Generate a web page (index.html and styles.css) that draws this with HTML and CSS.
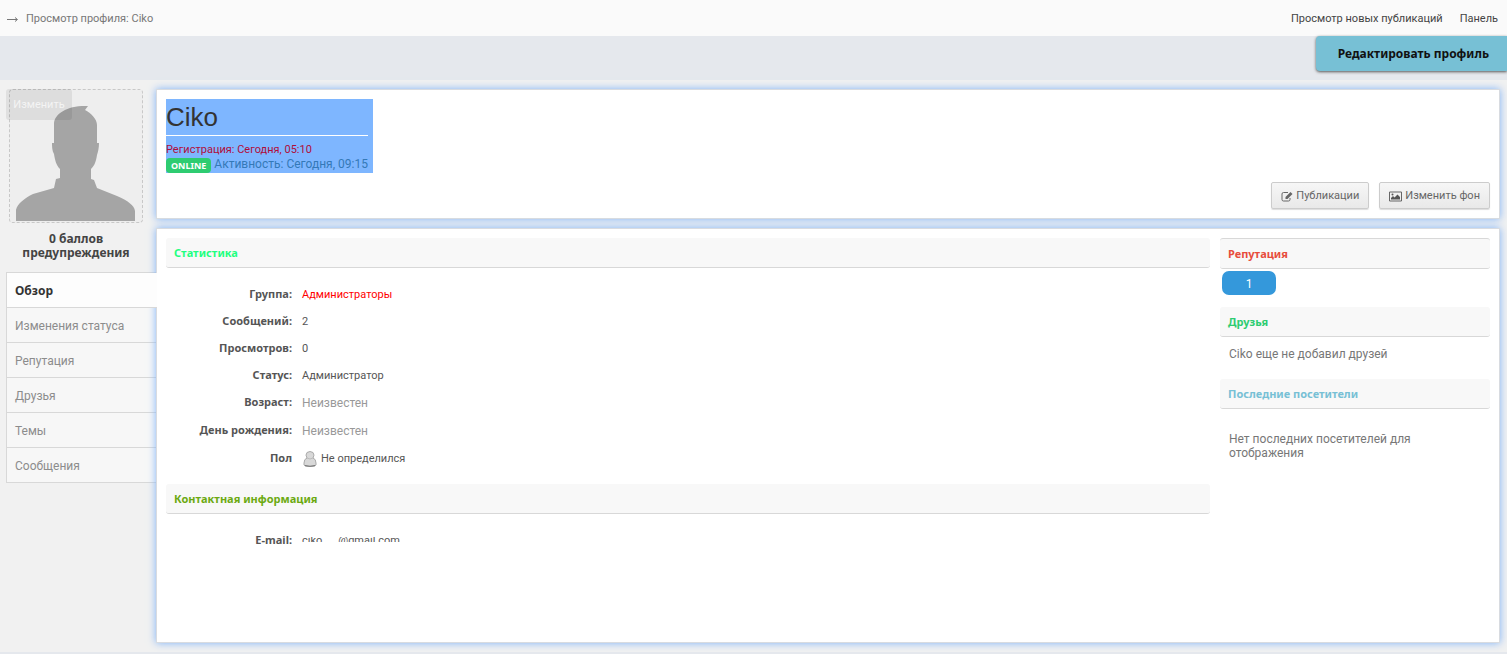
FILE: index.html
```html
<!DOCTYPE html>
<html lang="ru">
<head>
<meta charset="utf-8">
<title>Просмотр профиля: Ciko</title>
<link rel="stylesheet" href="styles.css">
</head>
<body>
<header class="topbar">
  <nav class="crumbs" aria-label="Навигация"><svg class="crumb-arrow" width="12" height="9" viewBox="0 0 12 9" aria-hidden="true"><path d="M0 4.5H10M8 2.5L10.500 4.500L8 6.500" fill="none" stroke="#777"/></svg><span>Просмотр профиля: Ciko</span></nav>
  <nav class="toplinks"><a href="#new">Просмотр новых публикаций</a><a href="#panel">Панель</a></nav>
</header>
<div class="actionbar"><button class="edit-profile" type="button">Редактировать профиль</button></div>
<div class="layout">
  <aside class="sidebar">
    <div class="photo">
      <svg class="avatar" viewBox="0 0 128 128" role="img" aria-label="Фото профиля"><path fill="#a5a5a5" d="M3 128V117C4 111 12 105 20 101L41 95L43 86L47 85V76C43 72 42 67 41 61C39 58 39 53 39 50H41V31C41 20 56 12 75 13L72 17C78 20 84 26 84 32V50H86C86 55 85 59 84 62C83 68 82 72 78 76V86L81 87L84 95L104 103C115 108 121 112 122 118V128Z"/></svg>
      <button class="photo-edit" type="button">Изменить</button>
    </div>
    <p class="warnings">0 баллов предупреждения</p>
    <nav class="tabs">
      <a class="tab active" href="#overview">Обзор</a>
      <a class="tab" href="#status">Изменения статуса</a>
      <a class="tab" href="#reputation">Репутация</a>
      <a class="tab" href="#friends">Друзья</a>
      <a class="tab" href="#topics">Темы</a>
      <a class="tab" href="#posts">Сообщения</a>
    </nav>
  </aside>
  <main class="content">
    <section class="card hero">
      <div class="identity">
        <h1>Ciko</h1>
        <p class="registered">Регистрация: Сегодня, 05:10</p>
        <p class="activity"><span class="online">ONLINE</span><span>Активность: Сегодня, 09:15</span></p>
      </div>
      <div class="hero-actions">
        <button class="btn" type="button"><svg width="12" height="11" viewBox="0 0 12 11" aria-hidden="true"><path d="M7 1.500H2.500Q1 1.500 1 3V8.500Q1 10 2.500 10H7.500Q9 10 9 8.500V7" fill="none" stroke="#666"/><path d="M4.500 8V6L9.500 1L11.500 3L6.500 8Z" fill="#666"/></svg>Публикации</button>
        <button class="btn" type="button"><svg width="13" height="11" viewBox="0 0 13 11" aria-hidden="true"><path d="M.5 1H12.500V10H.5Z" fill="none" stroke="#666"/><path d="M2 8.500V7L4 5L5.500 6.500L8.500 3.500L11 6V8.500Z" fill="#555"/><circle cx="3.500" cy="3.500" r="1" fill="#555"/></svg>Изменить фон</button>
      </div>
    </section>
    <section class="card details">
      <div class="info">
        <h2 class="bar stat">Статистика</h2>
        <dl class="facts">
          <dt>Группа:</dt><dd class="admin">Администраторы</dd>
          <dt>Сообщений:</dt><dd>2</dd>
          <dt>Просмотров:</dt><dd>0</dd>
          <dt>Статус:</dt><dd>Администратор</dd>
          <dt>Возраст:</dt><dd class="unknown">Неизвестен</dd>
          <dt>День рождения:</dt><dd class="unknown">Неизвестен</dd>
          <dt>Пол</dt><dd class="gender"><svg width="14" height="16" viewBox="0 0 14 16" aria-hidden="true"><path d="M4 7Q2 4 4 1.500Q7-.5 10 1.500Q12 4 10 7Q13 8 13 12V14Q12 15.500 9 15.500H5Q2 15.500 1 14V12Q1 8 4 7Z" fill="#d8d8d8" stroke="#aaa"/><path d="M4 7Q7 9 10 7" fill="none" stroke="#bbb"/><path d="M2 14.500Q7 16 12 14.500" fill="none" stroke="#777"/></svg>Не определился</dd>
        </dl>
        <h2 class="bar contact">Контактная информация</h2>
        <dl class="facts">
          <dt>E-mail:</dt><dd class="email"><span>ciko</span><span>@gmail.com</span></dd>
        </dl>
      </div>
      <div class="extra">
        <h2 class="bar rep">Репутация</h2>
        <p class="score">1</p>
        <h2 class="bar friends">Друзья</h2>
        <p class="note">Ciko еще не добавил друзей</p>
        <h2 class="bar visitors">Последние посетители</h2>
        <p class="note last">Нет последних посетителей для отображения</p>
      </div>
    </section>
  </main>
</div>
<footer class="foot"></footer>
</body>
</html>
```
FILE: styles.css
```css
* { box-sizing: border-box; }
body, h1, h2, p, dl, dd { margin: 0; }
body { font: 11px/14px Roboto, "Noto Sans", sans-serif; color: #555; background: #f1f1f1; min-height: 100vh; display: flex; flex-direction: column; }
a { color: inherit; text-decoration: none; }
button { font: inherit; color: inherit; }
.topbar { height: 36px; background: #fafafa; display: flex; align-items: center; justify-content: space-between; padding: 2px 9px 0 7px; }
.crumbs { display: flex; align-items: center; gap: 7px; color: #777; }
.toplinks { display: flex; gap: 17px; color: #444; }
.actionbar { height: 44px; background: #e5e8ed; display: flex; justify-content: flex-end; align-items: flex-start; }
.edit-profile { height: 35px; border: 0; border-radius: 4px 0 0 4px; background: #77c0d5; color: #111; font: 700 12px/14px "Noto Sans", sans-serif; padding: 0 18px 0 22px; box-shadow: 0 1px 3px #555; }
.layout { flex: 1; display: flex; padding: 9px 7px 9px 6px; }
.sidebar { width: 150px; flex: none; display: flex; flex-direction: column; }
.photo { position: relative; width: 134px; height: 134px; margin-left: 3px; padding: 3px; border: 1px dashed #c8c8c8; border-radius: 4px; background: #eee; }
.avatar { display: block; width: 128px; height: 128px; }
.photo-edit { position: absolute; left: -4px; top: -1px; width: 66px; height: 31px; padding: 1px 0 0; border: 0; border-radius: 3px; background: rgba(0,0,0,.07); color: #f4f4f4; }
.warnings { margin-top: 9px; padding: 0 10px 0 0; text-align: center; font: 700 12px/14px "Noto Sans", sans-serif; color: #444; }
.tabs { margin-top: 12px; border-left: 1px solid #d8d8d8; border-top: 1px solid #d8d8d8; }
.tab { display: flex; align-items: center; height: 35px; padding: 2px 0 0 8px; font-size: 12px; color: #8c8c8c; background: #f7f7f7; border-bottom: 1px solid #d8d8d8; }
.tab.active { position: relative; z-index: 1; margin-right: -1px; background: #fdfdfd; color: #333; font-family: "Noto Sans", sans-serif; font-weight: 700; }
.content { flex: 1; min-width: 0; display: flex; flex-direction: column; gap: 9px; }
.card { background: #fff; border: 1px solid #d8dbe0; box-shadow: 0 0 8px #7eb2f8; padding: 9px; }
.hero { height: 130px; display: flex; flex-direction: column; justify-content: space-between; }
.identity { align-self: flex-start; width: 207px; height: 74px; background: #7eb6ff; padding-right: 5px; }
h1 { height: 37px; font: 26px/37px "Liberation Sans", sans-serif; color: #333; border-bottom: 1px solid #fff; }
.registered { padding-top: 7px; color: #b00d3a; }
.activity { display: flex; align-items: flex-start; gap: 3px; font-size: 12px; line-height: 14px; color: #3479b7; white-space: nowrap; }
.online { height: 15px; margin-top: 1px; line-height: 15px; padding: 0 5px; border-radius: 4px; background: #2ecc71; color: #fff; font-family: "Noto Sans", sans-serif; font-size: 9px; font-weight: 700; }
.hero-actions { display: flex; justify-content: flex-end; gap: 10px; }
.btn { display: flex; align-items: center; gap: 3px; height: 27px; padding: 1px 9px 0; border: 1px solid #ccc; border-radius: 2px; background: linear-gradient(#f6f6f6, #e9e9e9); color: #666; box-shadow: 0 1px 1px #ddd; }
.details { flex: 1; display: flex; gap: 10px; }
.info { flex: 1; min-width: 0; }
.extra { width: 270px; flex: none; }
.bar { height: 30px; padding: 0 8px; font: 700 11px/29px "Noto Sans", sans-serif; background: #f8f8f8; border-bottom: 1px solid #d8d8d8; border-radius: 3px; }
.stat { color: #1eff80; }
.contact { color: #6caa12; margin-top: 12px; }
.rep { height: 31px; color: #e74c3c; border-top: 1px solid #d8d8d8; }
.friends { color: #2ecc71; margin-top: 12px; }
.visitors { color: #77c0d5; }
.facts { display: grid; grid-template-columns: 126px 1fr; column-gap: 10px; grid-template-rows: repeat(4, 27px); grid-auto-rows: 28px; align-items: center; padding-top: 12px; }
.contact + .facts { grid-template-rows: 27px; }
dt { text-align: right; font-family: "Noto Sans", sans-serif; font-weight: 700; }
dd { padding-top: 2px; }
.admin { color: #f00; }
.unknown { font-size: 12px; color: #999; }
.gender { display: flex; align-items: center; gap: 4px; padding-left: 1px; }
.email { position: relative; display: flex; gap: 16px; }
.email::before, .email::after { content: ""; position: absolute; left: 0; right: 0; background: #fff; }
.email::before { top: 0; height: 5px; }
.email::after { top: 10px; height: 8px; }
.score { width: 54px; height: 24px; margin: 2px 0 0 2px; border-radius: 7px; background: #3498db; color: #fff; font-size: 12px; line-height: 26px; text-align: center; }
.note { height: 42px; padding: 10px 50px 0 9px; font-size: 12px; color: #777; }
.last { height: auto; padding-top: 23px; }
.foot { height: 2px; background: #e5e8ed; }
```
